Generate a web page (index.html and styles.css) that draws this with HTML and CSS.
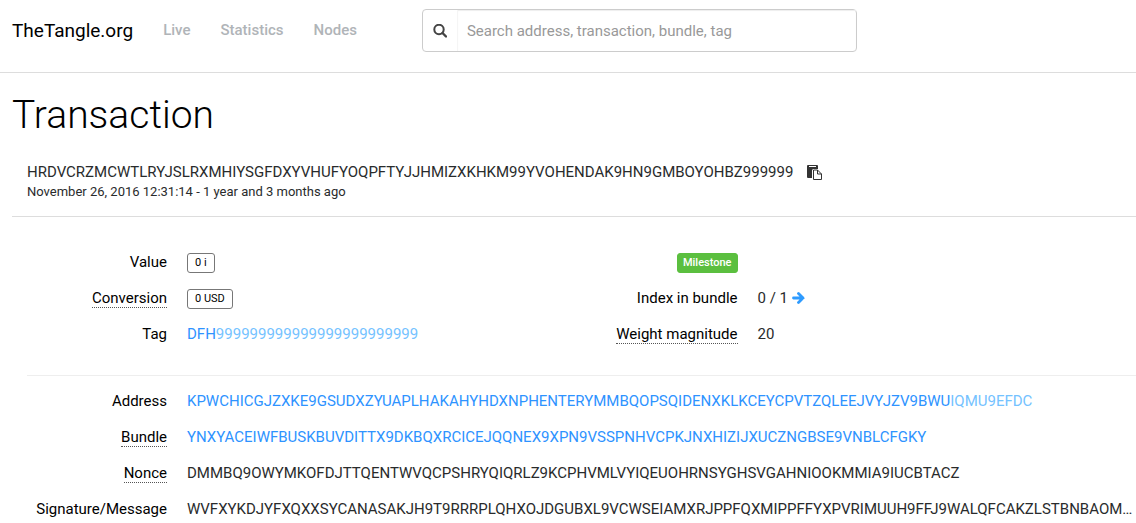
FILE: index.html
```html
<!DOCTYPE html>
<html lang="en">
<head>
  <meta charset="UTF-8">
  <meta name="viewport" content="width=device-width, initial-scale=1.0">
  <title>Transaction - TheTangle.org</title>
  <link rel="stylesheet" href="styles.css">
</head>
<body>

  <header class="navbar">
    <a class="brand" href="#">TheTangle.org</a>
    <nav class="nav">
      <a href="#">Live</a>
      <a href="#">Statistics</a>
      <a href="#">Nodes</a>
    </nav>
    <form class="search">
      <label class="search-icon" for="search" aria-label="Search">
        <svg width="14" height="14" viewBox="0 0 14 14"><circle cx="6" cy="5.500" r="4.700" fill="none" stroke="#444" stroke-width="2"/><path d="M9.500 9L13 12.500" stroke="#444" stroke-width="2.400" stroke-linecap="round"/></svg>
      </label>
      <input type="text" id="search" placeholder="Search address, transaction, bundle, tag">
    </form>
  </header>

  <main class="content">
    <h1>Transaction</h1>

    <div class="tx-head">
      <div class="hash">
        <span>HRDVCRZMCWTLRYJSLRXMHIYSGFDXYVHUFYOQPFTYJJHMIZXKHKM99YVOHENDAK9HN9GMBOYOHBZ999999</span>
        <button class="btn-copy" type="button" aria-label="Copy">
          <svg width="15" height="15" viewBox="0 0 15 15"><path d="M1 0h9a1 1 0 0 1 1 1v3H6.500A1.500 1.500 0 0 0 5 5.500V13H1a1 1 0 0 1-1-1V1a1 1 0 0 1 1-1z" fill="#333"/><path d="M2 1.500h7" stroke="#fff"/><path d="M6.500 5h4l4 4v5.500h-8z" fill="#fff" stroke="#333" stroke-linejoin="round"/><path d="M10.500 5v4h4" fill="none" stroke="#333"/></svg>
        </button>
      </div>
      <div class="date">November 26, 2016 12:31:14 - 1 year and 3 months ago</div>
    </div>

    <div class="details">
      <div class="columns">
        <dl class="list">
          <dt>Value</dt>
          <dd><span class="badge">0 i</span></dd>
          <dt><abbr>Conversion</abbr></dt>
          <dd><span class="badge">0 USD</span></dd>
          <dt>Tag</dt>
          <dd><a href="#">DFH<span class="rest">999999999999999999999999</span></a></dd>
        </dl>
        <dl class="list">
          <dt><span class="badge badge-green">Milestone</span></dt>
          <dd></dd>
          <dt>Index in bundle</dt>
          <dd>0 / 1 <a href="#" aria-label="Next"><svg class="arrow" width="13" height="12" viewBox="0 0 13 12"><path d="M1.500 6H11M6.500 1.500L11 6l-4.500 4.500" fill="none" stroke="#2e9bff" stroke-width="2.800" stroke-linecap="round"/></svg></a></dd>
          <dt><abbr>Weight magnitude</abbr></dt>
          <dd>20</dd>
        </dl>
      </div>

      <dl class="list list-long">
        <dt>Address</dt>
        <dd><a href="#">KPWCHICGJZXKE9GSUDXZYUAPLHAKAHYHDXNPHENTERYMMBQOPSQIDENXKLKCEYCPVTZQLEEJVYJZV9BWU<span class="rest">IQMU9EFDC</span></a></dd>
        <dt><abbr>Bundle</abbr></dt>
        <dd><a href="#">YNXYACEIWFBUSKBUVDITTX9DKBQXRCICEJQQNEX9XPN9VSSPNHVCPKJNXHIZIJXUCZNGBSE9VNBLCFGKY</a></dd>
        <dt><abbr>Nonce</abbr></dt>
        <dd>DMMBQ9OWYMKOFDJTTQENTWVQCPSHRYQIQRLZ9KCPHVMLVYIQEUOHRNSYGHSVGAHNIOOKMMIA9IUCBTACZ</dd>
        <dt>Signature/Message</dt>
        <dd>WVFXYKDJYFXQXXSYCANASAKJH9T9RRRPLQHXOJDGUBXL9VCWSEIAMXRJPPFQXMIPPFFYXPVRIMUUH9FFJ9WALQFCAKZLSTBNBAOM…</dd>
      </dl>
    </div>
  </main>

</body>
</html>
```
FILE: styles.css
```css
* {
  box-sizing: border-box;
}
body {
  margin: 0;
  background: #fff;
  color: #292b2c;
  font-family: Roboto, sans-serif;
  font-size: 15px;
  line-height: 20px;
}
a {
  color: #2e93ff;
  text-decoration: none;
}

/* top bar */
.navbar {
  display: flex;
  align-items: center;
  padding: 9px 12px 20px;
  border-bottom: 1px solid #ddd;
}
.brand {
  color: #000;
  font-size: 19px;
}
.nav {
  display: flex;
  gap: 30px;
  margin: 0 65px 0 30px;
  padding-bottom: 2px;
}
.nav a {
  color: #b0b4b8;
  font-weight: 500;
}
.search {
  display: flex;
  width: 435px;
  height: 43px;
  border: 1px solid #ccc;
  border-radius: 4px;
}
.search-icon {
  display: flex;
  align-items: center;
  justify-content: center;
  width: 35px;
  border-right: 1px solid #f5f5f5;
}
.search input {
  flex: 1;
  min-width: 0;
  padding: 0 9px;
  border: 0;
  background: none;
  font: inherit;
  box-shadow: inset 0 1px 1px #eee;
}
.search input::placeholder {
  color: #999;
}

/* transaction */
.content {
  padding-left: 12px;
}
h1 {
  margin: 0;
  padding: 18px 0 23px;
  color: #000;
  font-size: 39px;
  font-weight: 300;
  line-height: 48px;
}
.tx-head {
  padding: 0 15px 14px;
  border-bottom: 1px solid #ddd;
}
.hash {
  display: flex;
  align-items: center;
  gap: 14px;
}
.btn-copy {
  display: flex;
  padding: 0;
  border: 0;
  background: none;
  cursor: pointer;
}
.date {
  font-size: 13px;
}
.details {
  padding: 27px 0 0 15px;
}
.columns {
  display: grid;
  grid-template-columns: 1fr 1fr;
  gap: 32px;
  padding-bottom: 23px;
  border-bottom: 1px solid #eee;
}
.list {
  display: grid;
  grid-template-columns: 140px 1fr;
  grid-auto-rows: 36px;
  align-items: center;
  column-gap: 20px;
  margin: 0;
}
.list-long {
  padding-top: 7px;
}
dt {
  color: #000;
  text-align: right;
}
dd {
  margin: 0;
  white-space: nowrap;
}
abbr {
  display: inline-block;
  border-bottom: 1px dotted #555;
  line-height: 18px;
}
.rest {
  color: #74c2ff;
}
.badge {
  display: inline-block;
  padding: 0 7px;
  border: 1px solid #777;
  border-radius: 3px;
  color: #000;
  font-size: 11px;
  line-height: 18px;
  vertical-align: middle;
}
.badge-green {
  padding: 0 5px;
  border-color: #5bbf3f;
  background: #5bbf3f;
  color: #fff;
  font-weight: 500;
}
.arrow {
  vertical-align: -1px;
}
```
